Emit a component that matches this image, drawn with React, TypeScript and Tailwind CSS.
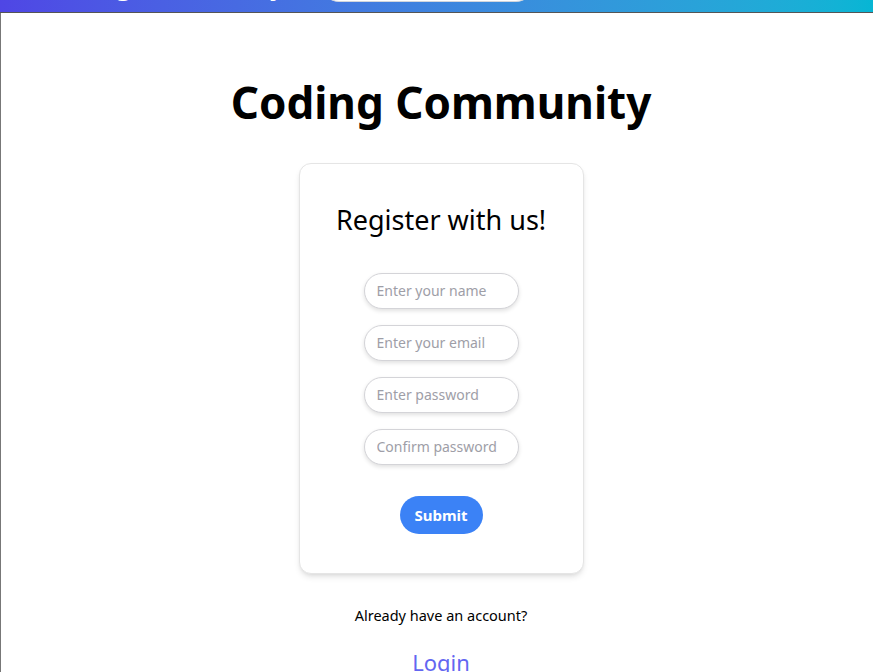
import React from "react";

const font = { fontFamily: '"Noto Sans", "Open Sans", sans-serif' };

function Field({ placeholder, type = "text" }: { placeholder: string; type?: string }) {
  return (
    <input
      type={type}
      placeholder={placeholder}
      className="w-[155px] h-[36px] rounded-full border border-[#d4d4d8] bg-white px-3 text-[14px] text-gray-800 shadow-[0_2px_4px_rgba(0,0,0,0.12)] outline-none placeholder:text-[#9e9ea7]"
    />
  );
}

export default function App() {
  return (
    <div className="min-h-screen bg-white" style={font}>
      {/* navbar, scrolled mostly out of view */}
      <nav className="h-[13px] overflow-hidden flex flex-col justify-end bg-gradient-to-r from-[#4f46e5] to-[#06b6d4] border-b border-[#555]">
        <div className="flex items-end h-[60px] pl-[45px] shrink-0">
          <span className="text-white font-bold text-[25px] leading-none mb-[14px]">Coding Community</span>
          <div className="ml-[37px] w-[213px] h-[36px] rounded-full bg-white border border-gray-300 mb-[10px]" />
        </div>
      </nav>

      <main className="border-l border-[#777] min-h-[659px] flex flex-col items-center pl-[8px]">
        <h1 className="mt-[62px] text-[44px] font-bold text-black leading-tight">Coding Community</h1>

        <div className="mt-[33px] w-[285px] rounded-xl border border-[#e5e5e5] bg-white shadow-md flex flex-col items-center pt-[39px] pb-[39px]">
          <h2 className="text-[27px] text-black leading-tight">Register with us!</h2>
          <form className="mt-[36px] flex flex-col items-center gap-4" onSubmit={(e) => e.preventDefault()}>
            <Field placeholder="Enter your name" />
            <Field placeholder="Enter your email" type="email" />
            <Field placeholder="Enter password" type="password" />
            <Field placeholder="Confirm password" type="password" />
            <button
              type="submit"
              className="mt-[15px] w-[83px] h-[38px] rounded-full bg-[#3b82f6] text-white font-bold text-[15px]"
            >
              Submit
            </button>
          </form>
        </div>

        <p className="mt-[31px] text-[14.5px] text-black">Already have an account?</p>
        <a href="#" className="mt-[19px] text-[22px] text-[#6366f1]">Login</a>
      </main>
    </div>
  );
}
